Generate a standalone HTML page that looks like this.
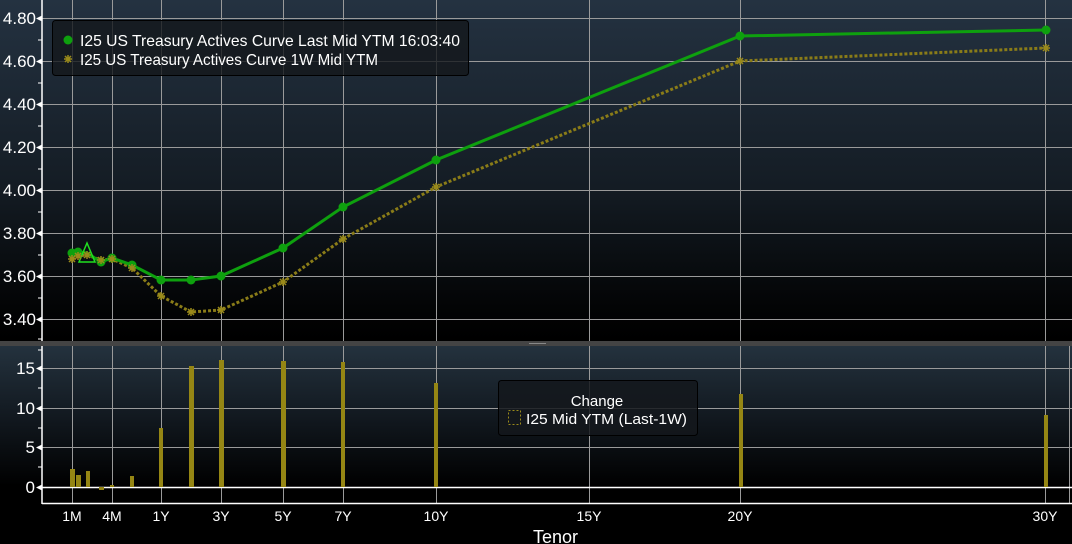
<!DOCTYPE html>
<html><head><meta charset="utf-8"><style>
html,body{margin:0;padding:0;background:#000;width:1072px;height:544px;overflow:hidden}
svg{display:block}
text{font-family:"Liberation Sans","DejaVu Sans",sans-serif;fill:#fff}
</style></head><body>
<svg width="1072" height="544" viewBox="0 0 1072 544" xmlns="http://www.w3.org/2000/svg">
<defs>
<linearGradient id="g1" x1="0" y1="0" x2="0" y2="1">
<stop offset="0" stop-color="#243241"/><stop offset="0.55" stop-color="#141c24"/><stop offset="0.9" stop-color="#030405"/><stop offset="1" stop-color="#000"/>
</linearGradient>
<linearGradient id="g2" x1="0" y1="0" x2="0" y2="1">
<stop offset="0" stop-color="#24323e"/><stop offset="0.5" stop-color="#121920"/><stop offset="1" stop-color="#000"/>
</linearGradient>
</defs>
<rect x="0" y="0" width="1072" height="341" fill="url(#g1)"/>
<rect x="0" y="346" width="1072" height="140" fill="url(#g2)"/>
<rect x="0" y="341" width="1072" height="5" fill="#444"/>
<rect x="529" y="343" width="17" height="1" fill="#888"/>
<g stroke="#9a9a9a" stroke-width="1">
<line x1="42" y1="18.5" x2="1072" y2="18.5"/><line x1="42" y1="61.5" x2="1072" y2="61.5"/>
<line x1="42" y1="104.5" x2="1072" y2="104.5"/><line x1="42" y1="147.5" x2="1072" y2="147.5"/>
<line x1="42" y1="190.5" x2="1072" y2="190.5"/><line x1="42" y1="233.5" x2="1072" y2="233.5"/>
<line x1="42" y1="276.5" x2="1072" y2="276.5"/><line x1="42" y1="319.5" x2="1072" y2="319.5"/>
<line x1="42" y1="368.5" x2="1072" y2="368.5"/><line x1="42" y1="408.5" x2="1072" y2="408.5"/><line x1="42" y1="447.5" x2="1072" y2="447.5"/>
</g>
<g stroke="#9a9a9a" stroke-width="1">
<line x1="72.5" y1="0" x2="72.5" y2="341"/><line x1="112.5" y1="0" x2="112.5" y2="341"/><line x1="161.5" y1="0" x2="161.5" y2="341"/>
<line x1="221.5" y1="0" x2="221.5" y2="341"/><line x1="283.5" y1="0" x2="283.5" y2="341"/><line x1="343.5" y1="0" x2="343.5" y2="341"/>
<line x1="436.5" y1="0" x2="436.5" y2="341"/><line x1="589.5" y1="0" x2="589.5" y2="341"/><line x1="740.5" y1="0" x2="740.5" y2="341"/><line x1="1045.5" y1="0" x2="1045.5" y2="341"/>
<line x1="72.5" y1="346" x2="72.5" y2="503"/><line x1="112.5" y1="346" x2="112.5" y2="503"/><line x1="161.5" y1="346" x2="161.5" y2="503"/>
<line x1="221.5" y1="346" x2="221.5" y2="503"/><line x1="283.5" y1="346" x2="283.5" y2="503"/><line x1="343.5" y1="346" x2="343.5" y2="503"/>
<line x1="436.5" y1="346" x2="436.5" y2="503"/><line x1="589.5" y1="346" x2="589.5" y2="503"/><line x1="740.5" y1="346" x2="740.5" y2="503"/><line x1="1045.5" y1="346" x2="1045.5" y2="503"/>
<line x1="1069.5" y1="346" x2="1069.5" y2="503"/>
</g>
<g stroke="#fff" stroke-width="1.5">
<line x1="42" y1="0" x2="42" y2="341"/><line x1="42" y1="346" x2="42" y2="504"/>
<line x1="42" y1="487.5" x2="1072" y2="487.5"/><line x1="42" y1="503.5" x2="1072" y2="503.5"/>
</g>
<g stroke="#fff" stroke-width="1">
<line x1="38" y1="40" x2="42" y2="40"/><line x1="38" y1="83" x2="42" y2="83"/><line x1="38" y1="126" x2="42" y2="126"/><line x1="38" y1="169" x2="42" y2="169"/><line x1="38" y1="212" x2="42" y2="212"/><line x1="38" y1="255" x2="42" y2="255"/><line x1="38" y1="298" x2="42" y2="298"/><line x1="38" y1="339" x2="42" y2="339"/>
<line x1="38" y1="388" x2="42" y2="388"/><line x1="38" y1="428" x2="42" y2="428"/><line x1="38" y1="467" x2="42" y2="467"/><line x1="38" y1="350" x2="42" y2="350"/>
</g>
<g fill="#fff">
<path d="M36 18.5l6-3v6z"/><path d="M36 61.5l6-3v6z"/><path d="M36 104.5l6-3v6z"/><path d="M36 147.5l6-3v6z"/><path d="M36 190.5l6-3v6z"/><path d="M36 233.5l6-3v6z"/><path d="M36 276.5l6-3v6z"/><path d="M36 319.5l6-3v6z"/>
<path d="M36 368.5l6-3v6z"/><path d="M36 408.5l6-3v6z"/><path d="M36 447.5l6-3v6z"/><path d="M36 487.5l6-3v6z"/>
</g>
<g font-size="17" text-anchor="end">
<text x="36" y="24">4.80</text><text x="36" y="67">4.60</text><text x="36" y="110">4.40</text><text x="36" y="153">4.20</text>
<text x="36" y="196">4.00</text><text x="36" y="239">3.80</text><text x="36" y="282">3.60</text><text x="36" y="325">3.40</text>
<text x="35" y="374">15</text><text x="35" y="414">10</text><text x="35" y="453">5</text><text x="35" y="493">0</text>
</g>
<g font-size="14" text-anchor="middle">
<text x="72" y="521">1M</text><text x="112" y="521">4M</text><text x="161" y="521">1Y</text><text x="221" y="521">3Y</text>
<text x="283" y="521">5Y</text><text x="343" y="521">7Y</text><text x="436" y="521">10Y</text><text x="589" y="521">15Y</text>
<text x="740" y="521">20Y</text><text x="1045" y="521">30Y</text>
</g>
<text x="533" y="543" font-size="18">Tenor</text>
<g fill="#958614">
<rect x="70" y="469" width="5" height="18"/><rect x="76" y="475" width="5" height="12"/><rect x="86" y="471" width="4" height="16"/>
<rect x="99" y="487" width="5" height="3"/><rect x="110" y="485" width="4" height="2"/><rect x="130" y="476" width="4" height="11"/>
<rect x="159" y="428" width="4" height="59"/><rect x="189" y="366" width="5" height="121"/><rect x="219" y="360" width="5" height="127"/>
<rect x="281" y="361" width="5" height="126"/><rect x="341" y="362" width="4" height="125"/><rect x="434" y="383" width="4" height="104"/>
<rect x="739" y="394" width="4" height="93"/><rect x="1044" y="415" width="4" height="72"/>
</g>
<polyline fill="none" stroke="#8a7c18" stroke-width="3" stroke-dasharray="3,2" points="72,259 78,256 87,255 101,260 112,259 132,268 161,296 191,312 221,310 283,282 343,239 436,187 740,61 1046,48"/>
<polyline fill="none" stroke="#0ea00e" stroke-width="3" points="72,253 78,252 87,253 101,262 112,258 132,265 161,280 191,280 221,276 283,248 343,207 436,160 740,36 1046,30"/>
<g fill="#0ea00e">
<circle cx="72" cy="253" r="4.5"/><circle cx="78" cy="252" r="4.5"/><circle cx="101" cy="262" r="4.5"/><circle cx="112" cy="258" r="4.5"/><circle cx="132" cy="265" r="4.5"/>
<circle cx="161" cy="280" r="4.5"/><circle cx="191" cy="280" r="4.5"/><circle cx="221" cy="276" r="4.5"/><circle cx="283" cy="248" r="4.5"/>
<circle cx="343" cy="207" r="4.5"/><circle cx="436" cy="160" r="4.5"/><circle cx="740" cy="36" r="4.5"/><circle cx="1046" cy="30" r="4.5"/>
</g>
<path d="M87 243 L79 262 L95 262 Z" fill="none" stroke="#20e020" stroke-width="1.5"/>
<g stroke="#9a8a1a" stroke-width="1.5">
<path d="M68 259h8M72 255v8M69 256l6 6M75 256l-6 6"/><path d="M74 256h8M78 252v8M75 253l6 6M81 253l-6 6"/><path d="M83 255h8M87 251v8M84 252l6 6M90 252l-6 6"/>
<path d="M97 260h8M101 256v8M98 257l6 6M104 257l-6 6"/><path d="M108 259h8M112 255v8M109 256l6 6M115 256l-6 6"/><path d="M128 268h8M132 264v8M129 265l6 6M135 265l-6 6"/>
<path d="M157 296h8M161 292v8M158 293l6 6M164 293l-6 6"/><path d="M187 312h8M191 308v8M188 309l6 6M194 309l-6 6"/><path d="M217 310h8M221 306v8M218 307l6 6M224 307l-6 6"/>
<path d="M279 282h8M283 278v8M280 279l6 6M286 279l-6 6"/><path d="M339 239h8M343 235v8M340 236l6 6M346 236l-6 6"/><path d="M432 187h8M436 183v8M433 184l6 6M439 184l-6 6"/>
<path d="M736 61h8M740 57v8M737 58l6 6M743 58l-6 6"/><path d="M1042 48h8M1046 44v8M1043 45l6 6M1049 45l-6 6"/>
</g>
<rect x="52.5" y="20.5" width="416" height="55" rx="3" fill="rgba(20,24,28,0.8)" stroke="#000"/>
<circle cx="68" cy="40" r="4.5" fill="#0ea00e"/>
<path d="M64 59h8M68 55v8M65 56l6 6M71 56l-6 6" stroke="#9a8a1a" stroke-width="1.5"/>
<text x="80" y="46" font-size="16" textLength="380" lengthAdjust="spacingAndGlyphs">I25 US Treasury Actives Curve Last Mid YTM 16:03:40</text>
<text x="80" y="65" font-size="16" textLength="298" lengthAdjust="spacingAndGlyphs">I25 US Treasury Actives Curve 1W Mid YTM</text>
<rect x="498.5" y="380.5" width="199" height="55" rx="3" fill="rgba(20,24,28,0.85)" stroke="#000"/>
<text x="597" y="406" font-size="15" text-anchor="middle">Change</text>
<rect x="508.5" y="410.5" width="12" height="14" fill="none" stroke="#9a8a1a" stroke-dasharray="2,2"/>
<text x="526" y="424" font-size="15" textLength="161" lengthAdjust="spacingAndGlyphs">I25 Mid YTM (Last-1W)</text>
</svg>
</body></html>
